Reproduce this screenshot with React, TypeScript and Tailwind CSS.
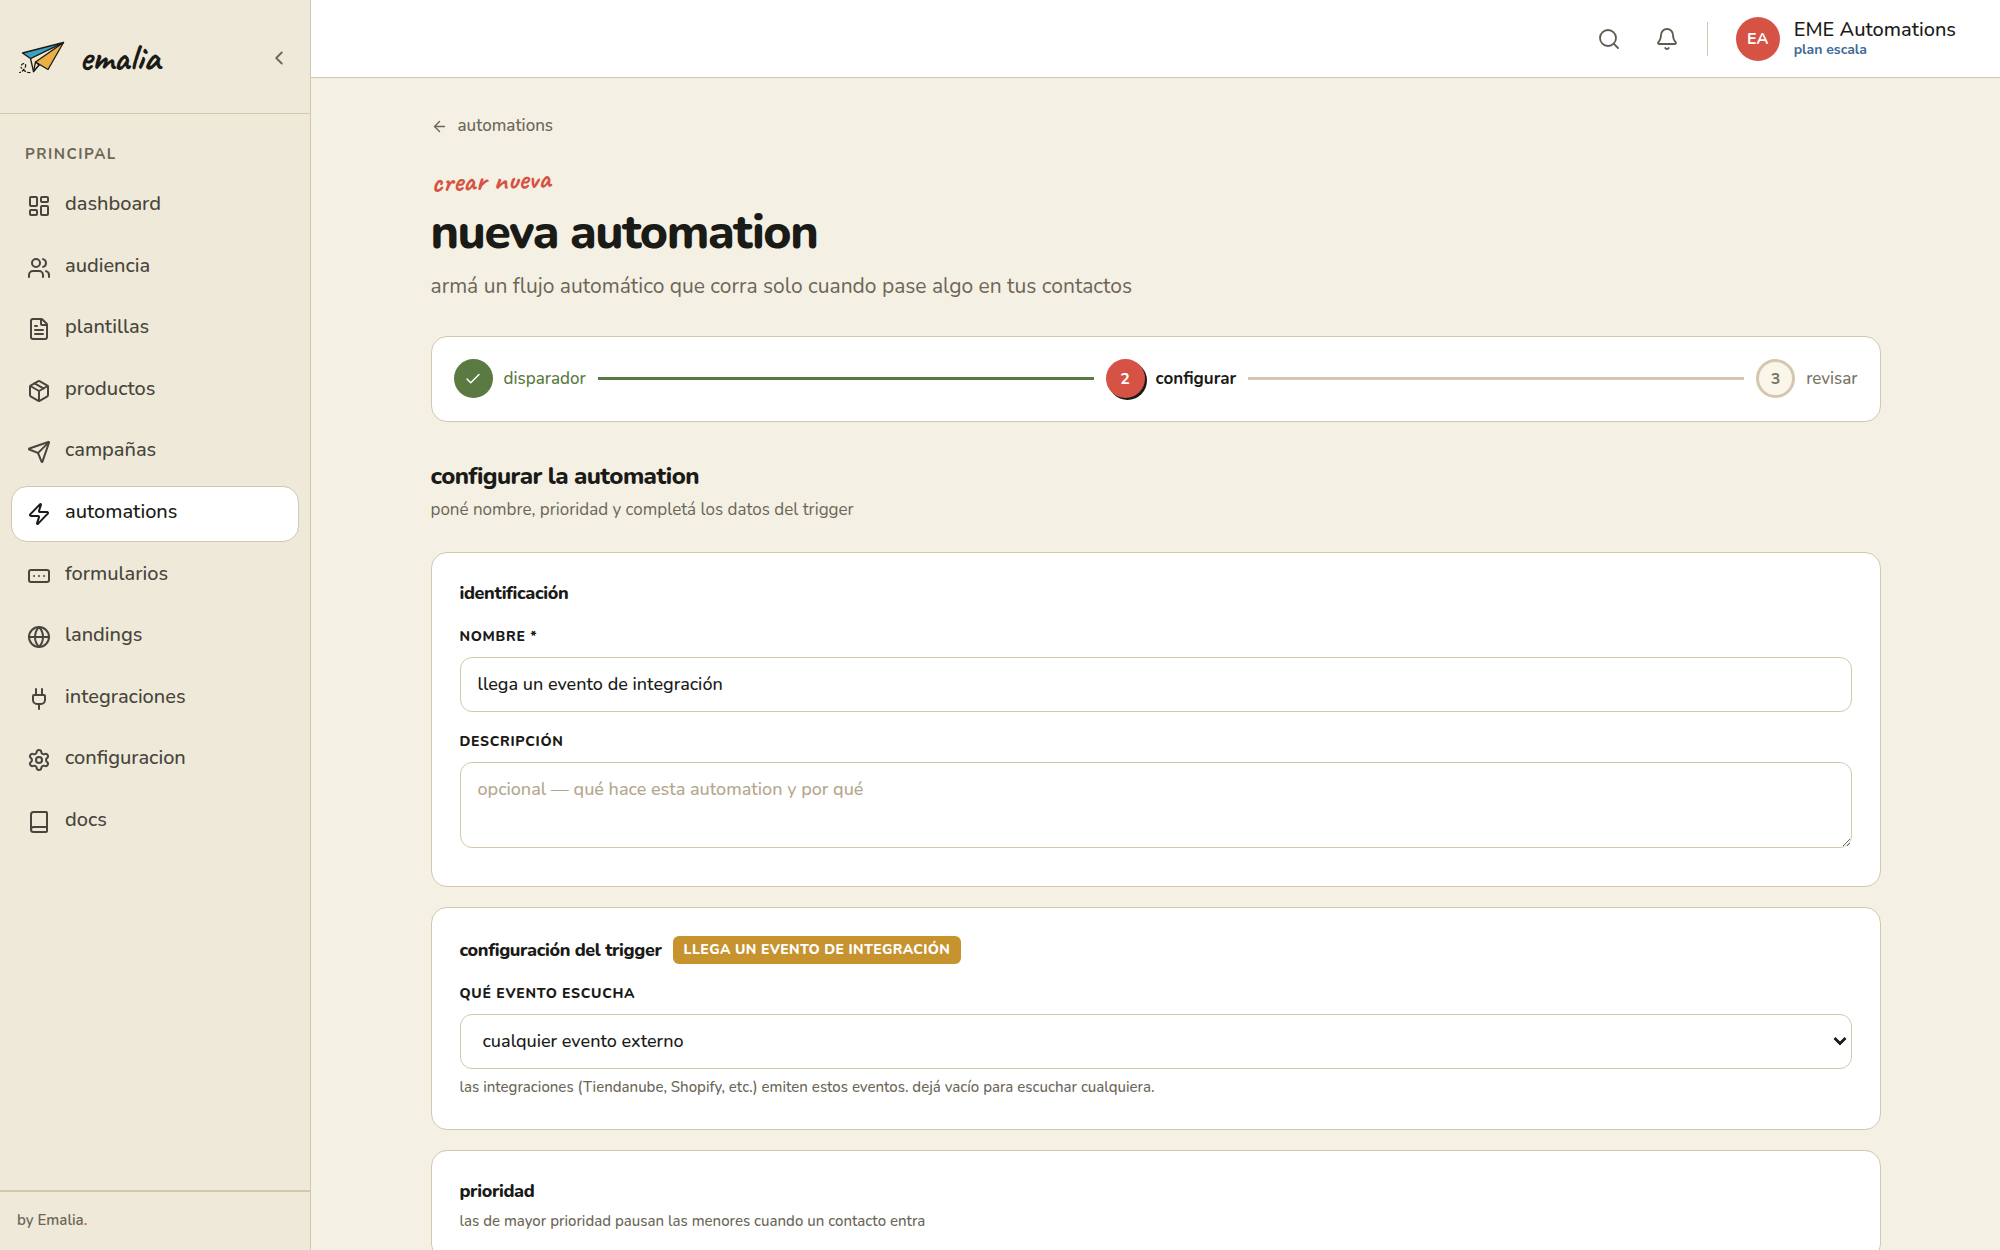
import { useState } from "react";
import type { ReactNode } from "react";
import {
  ArrowLeft,
  Bell,
  Book,
  Check,
  ChevronLeft,
  FileText,
  Globe,
  LayoutDashboard,
  Package,
  Plug,
  RectangleEllipsis,
  Search,
  Send,
  Settings,
  Users,
  Zap,
} from "lucide-react";

const NAV = [
  { label: "dashboard", icon: LayoutDashboard },
  { label: "audiencia", icon: Users },
  { label: "plantillas", icon: FileText },
  { label: "productos", icon: Package },
  { label: "campañas", icon: Send },
  { label: "automations", icon: Zap },
  { label: "formularios", icon: RectangleEllipsis },
  { label: "landings", icon: Globe },
  { label: "integraciones", icon: Plug },
  { label: "configuracion", icon: Settings },
  { label: "docs", icon: Book },
];

function PlaneLogo() {
  return (
    <svg width="48" height="36" viewBox="0 0 48 36" fill="none" aria-hidden="true">
      <g stroke="#1a1a17" strokeWidth="1.3" strokeLinejoin="round" strokeLinecap="round">
        <path d="M45.500 2.500 12.500 18.500 15.500 31.500 20 26Z" fill="#f6e6c4" />
        <path d="M45.500 2.500 4.500 13 12.500 18.500Z" fill="#3aa3c4" />
        <path d="M45.500 2.500 17.500 22 30 29.500Z" fill="#eab045" />
        <path d="M17.500 22 15.500 31.500 21 25Z" fill="#f6e6c4" />
        <path
          d="M12 32.500C8 33 5 29.500 3 27.500M3.500 25C5 22.500 8.500 23.500 7.500 26.500 6.500 29.500 4 32 1.500 32.500"
          strokeDasharray="2.6 2.2"
          strokeWidth="1.2"
        />
      </g>
    </svg>
  );
}

function Sidebar() {
  return (
    <aside className="flex w-[311px] shrink-0 flex-col border-r border-[#d3c8ad] bg-[#efe9d9]">
      <div className="flex h-[114px] shrink-0 items-center justify-between border-b border-[#d3c8ad] pt-0.5 pl-[18px] pr-5">
        <a href="#inicio" className="flex items-center gap-[13px]">
          <PlaneLogo />
          <span className="font-[Caveat,cursive] text-[38px] leading-12 font-bold">emalia</span>
        </a>
        <button type="button" aria-label="Contraer menú" className="text-[#6b6658]">
          <ChevronLeft size={22} />
        </button>
      </div>

      <nav className="flex-1 px-[11px] pt-7">
        <p className="mb-3 px-3.5 text-[15px] leading-6 font-bold tracking-widest text-[#6b6658]">
          PRINCIPAL
        </p>
        <ul className="flex h-[672px] flex-col justify-between">
          {NAV.map(({ label, icon: Icon }) => (
            <li key={label}>
              <a
                href={`#${label}`}
                className={
                  label === "automations"
                    ? "flex h-14 items-center gap-3.5 rounded-2xl border border-[#d3c8ad] bg-white px-[15px]"
                    : "flex h-14 items-center gap-3.5 rounded-2xl border border-transparent px-[15px] text-[#47453c]"
                }
              >
                <Icon size={24} strokeWidth={2} />
                <span className="pb-1 text-xl leading-6 font-medium">{label}</span>
              </a>
            </li>
          ))}
        </ul>
      </nav>

      <div className="border-t-2 border-[#d3c8ad] px-[17px] pt-4 pb-[18px] text-[15px] leading-6 font-semibold text-[#6b6658]">
        by Emalia<span className="text-[#d65245]">.</span>
      </div>
    </aside>
  );
}

function Topbar() {
  return (
    <header className="flex h-[78px] shrink-0 items-center justify-end border-b border-[#d3c8ad] bg-white pr-11">
      <button type="button" aria-label="Buscar" className="mr-[34px] text-[#5f5b4e]">
        <Search size={24} strokeWidth={1.8} />
      </button>
      <button type="button" aria-label="Notificaciones" className="mr-7 text-[#5f5b4e]">
        <Bell size={24} strokeWidth={1.8} />
      </button>
      <div className="mr-7 h-[34px] w-px bg-[#d3c8ad]" />
      <div className="flex items-center gap-3.5">
        <div className="flex size-11 items-center justify-center rounded-full bg-[#d65245] font-bold text-white">
          EA
        </div>
        <div className="pb-0.5">
          <p className="text-xl leading-6 font-medium">EME Automations</p>
          <p className="text-sm leading-4 font-bold text-[#3d6a9c]">plan escala</p>
        </div>
      </div>
    </header>
  );
}

function Stepper() {
  return (
    <ol className="flex h-[86px] items-center gap-3 rounded-2xl border border-[#d3c8ad] bg-white px-[22px]">
      <li className="flex items-center gap-[11px] text-[#5a7a42]">
        <span className="flex size-[39px] items-center justify-center rounded-full bg-[#5a7a42] text-white">
          <Check size={18} />
        </span>
        <span className="text-[17px] font-medium">disparador</span>
      </li>
      <li aria-hidden="true" className="h-[3px] flex-1 bg-[#5a7a42]" />
      <li className="flex items-center gap-[11px]" aria-current="step">
        <span className="flex size-[39px] items-center justify-center rounded-full bg-[#d65245] font-bold text-white shadow-[2px_2px_0_#1a1a17]">
          2
        </span>
        <span className="text-[17px] font-bold">configurar</span>
      </li>
      <li aria-hidden="true" className="h-[3px] flex-1 bg-[#d3c8ad]" />
      <li className="flex items-center gap-[11px] text-[#7a7565]">
        <span className="flex size-[39px] items-center justify-center rounded-full border-3 border-[#d3c8ad] bg-[#faf6ea] font-bold">
          3
        </span>
        <span className="text-[17px] font-medium">revisar</span>
      </li>
    </ol>
  );
}

function Card({ children }: { children: ReactNode }) {
  return (
    <section className="rounded-2xl border border-[#d3c8ad] bg-white p-7">{children}</section>
  );
}

const labelStyle = "mb-2.5 block text-sm leading-5 font-extrabold tracking-wider";

export default function App() {
  const [name, setName] = useState("llega un evento de integración");
  const [description, setDescription] = useState("");
  const [event, setEvent] = useState("");

  return (
    <div className="flex h-screen overflow-hidden bg-[#f4f0e3] font-[Nunito,Lato,sans-serif] text-[#1a1a17]">
      <Sidebar />

      <div className="flex min-w-0 flex-1 flex-col">
        <Topbar />

        <main className="flex-1 overflow-y-auto px-10 pt-9 pb-10 [scrollbar-width:none]">
          <div className="mx-auto max-w-[1450px]">
            {/* HEADER */}
            <a href="#automations" className="inline-flex items-center gap-2.5 text-[#6b6658]">
              <ArrowLeft size={17} />
              <span className="text-[17px] leading-6 font-medium">automations</span>
            </a>
            <p className="mt-5 w-fit -rotate-2 font-[Caveat,cursive] text-3xl leading-9 font-bold text-[#d65245]">
              crear nueva
            </p>
            <h1 className="mt-1.5 text-5xl leading-14 font-extrabold tracking-[-0.03em]">
              nueva automation
            </h1>
            <p className="mt-2.5 text-[21px] leading-8 text-[#6b6658]">
              armá un flujo automático que corra solo cuando pase algo en tus contactos
            </p>

            <div className="mt-[34px]">
              <Stepper />
            </div>

            <h2 className="mt-[38px] text-2xl leading-8 font-extrabold tracking-tight">
              configurar la automation
            </h2>
            <p className="mt-1.5 text-[17px] leading-6 text-[#6b6658]">
              poné nombre, prioridad y completá los datos del trigger
            </p>

            {/* FORM */}
            <form className="mt-[30px] flex flex-col gap-5" onSubmit={(e) => e.preventDefault()}>
              <Card>
                <h3 className="text-lg leading-6 font-extrabold tracking-[-0.02em]">
                  identificación
                </h3>
                <label htmlFor="name" className={`mt-[22px] ${labelStyle}`}>
                  NOMBRE *
                </label>
                <input
                  id="name"
                  value={name}
                  onChange={(e) => setName(e.target.value)}
                  className="block h-[55px] w-full rounded-xl border border-[#d3c8ad] bg-white px-[17px] text-lg font-medium"
                />
                <label htmlFor="description" className={`mt-5 ${labelStyle}`}>
                  DESCRIPCIÓN
                </label>
                <textarea
                  id="description"
                  value={description}
                  onChange={(e) => setDescription(e.target.value)}
                  placeholder="opcional — qué hace esta automation y por qué"
                  className="mb-2.5 block h-[86px] w-full resize-y rounded-xl border border-[#d3c8ad] bg-white px-[17px] py-3 text-lg font-medium placeholder:text-[#b3a88c]"
                />
              </Card>

              <Card>
                <div className="flex items-center gap-[11px]">
                  <h3 className="text-lg leading-7 font-extrabold tracking-[-0.02em]">
                    configuración del trigger
                  </h3>
                  <span className="rounded-md bg-[#c6932f] px-[11px] text-sm leading-7 font-extrabold tracking-wide text-white">
                    LLEGA UN EVENTO DE INTEGRACIÓN
                  </span>
                </div>
                <label htmlFor="event" className={`mt-5 ${labelStyle}`}>
                  QUÉ EVENTO ESCUCHA
                </label>
                <div className="relative">
                  <select
                    id="event"
                    value={event}
                    onChange={(e) => setEvent(e.target.value)}
                    className="block h-[55px] w-full appearance-none rounded-xl border border-[#d3c8ad] bg-white px-[22px] text-lg font-medium"
                  >
                    <option value="">cualquier evento externo</option>
                  </select>
                  <svg
                    width="14"
                    height="10"
                    viewBox="0 0 14 10"
                    aria-hidden="true"
                    className="pointer-events-none absolute inset-y-0 right-[5px] my-auto"
                  >
                    <path d="M1.500 2 7 7.500 12.500 2" fill="none" stroke="#1a1a17" strokeWidth="2.8" />
                  </svg>
                </div>
                <p className="mt-2 mb-1 text-[15px] leading-5 font-medium text-[#6b6658]">
                  las integraciones (Tiendanube, Shopify, etc.) emiten estos eventos. dejá vacío
                  para escuchar cualquiera.
                </p>
              </Card>

              <Card>
                <h3 className="text-lg leading-6 font-extrabold tracking-[-0.02em]">prioridad</h3>
                <p className="mt-2 text-[15px] leading-5 font-medium text-[#6b6658]">
                  las de mayor prioridad pausan las menores cuando un contacto entra
                </p>
              </Card>
            </form>
          </div>
        </main>
      </div>
    </div>
  );
}
